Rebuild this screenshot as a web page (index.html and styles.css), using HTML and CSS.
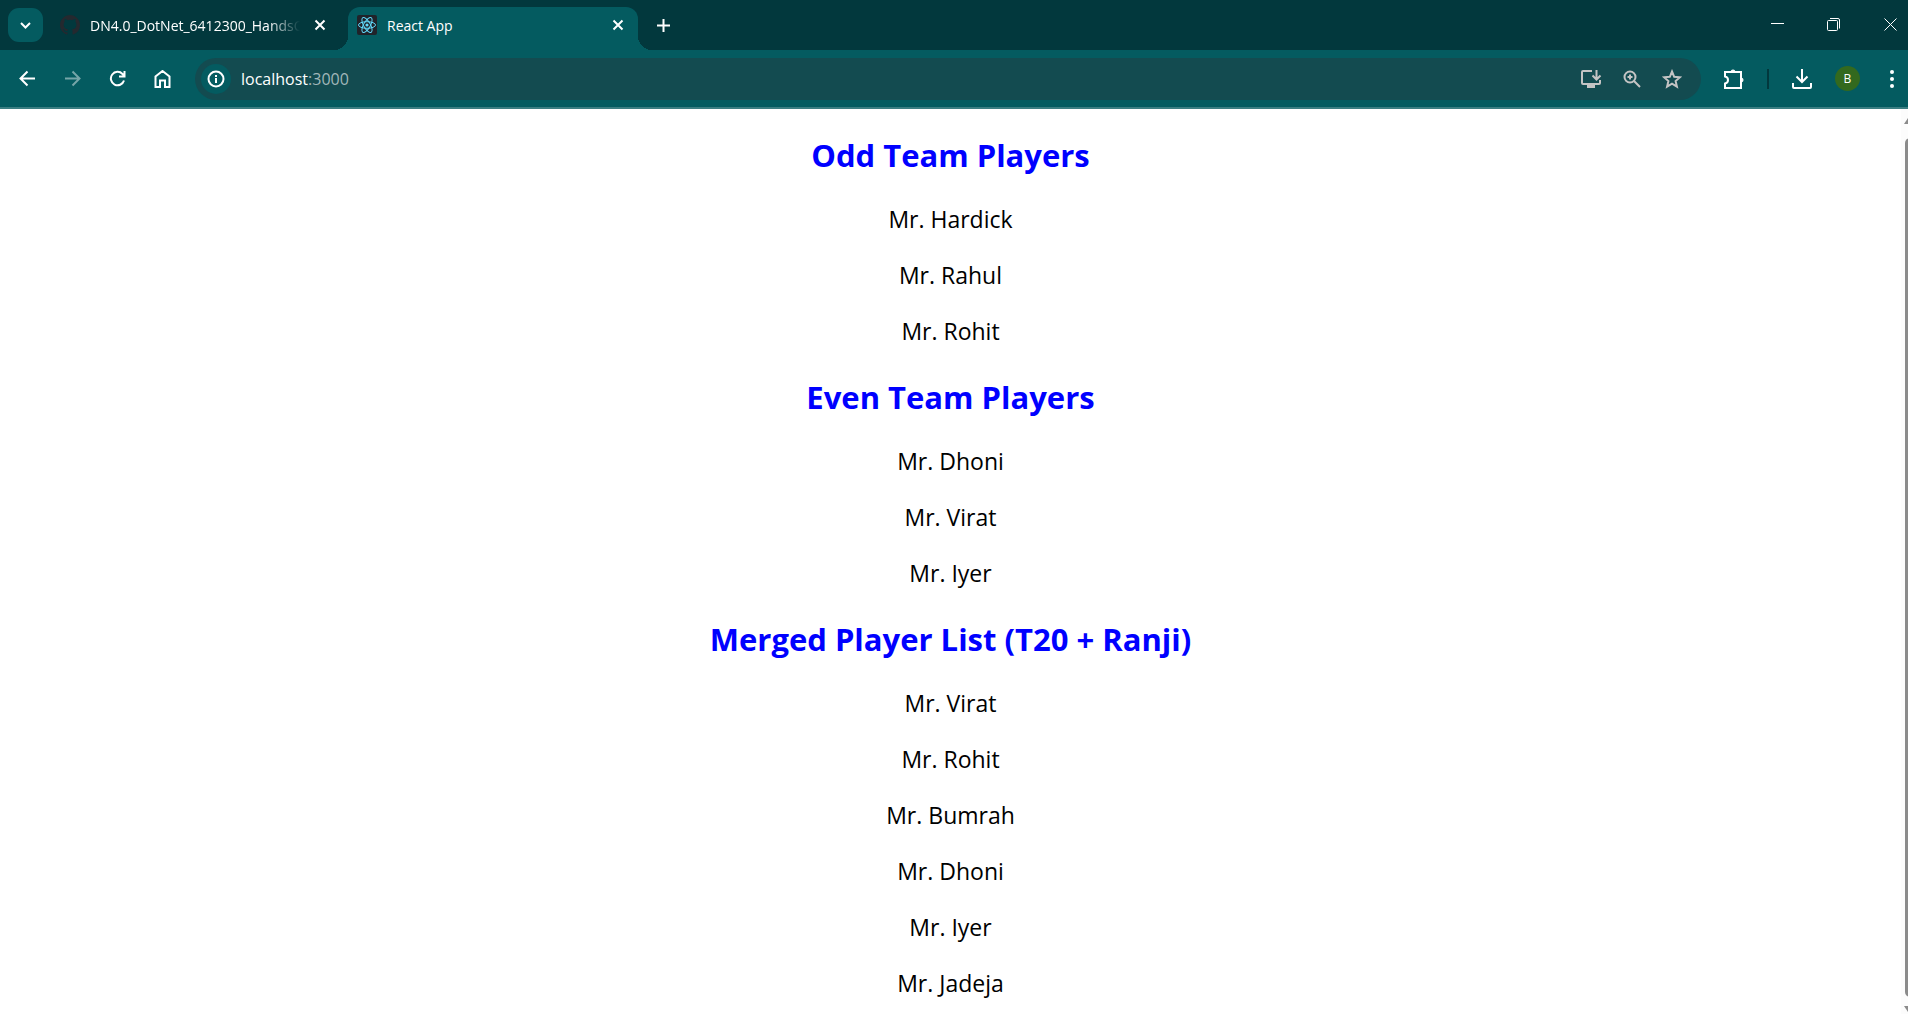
FILE: index.html
```
<!DOCTYPE html>
<html lang="en">
<head>
<meta charset="utf-8">
<meta name="viewport" content="width=device-width, initial-scale=1">
<title>React App</title>
<link rel="stylesheet" href="styles.css">
</head>
<body>
<header class="browser">
  <div class="tabstrip">
    <button class="tab-search" aria-label="Search tabs"><svg width="17" height="17" viewBox="0 0 17 17"><path d="M4 6l4.500 4.500L13 6"/></svg></button>
    <div class="tab">
      <svg class="favicon github" width="20" height="20" viewBox="0 0 16 16"><path d="M8 0C3.580 0 0 3.580 0 8c0 3.540 2.290 6.530 5.470 7.590.4.070.55-.17.55-.38v-1.490c-2.010.37-2.530-.49-2.690-.94-.09-.23-.48-.94-.82-1.130-.28-.15-.68-.52-.01-.53.63-.01 1.080.58 1.230.82.72 1.210 1.870.87 2.330.66.07-.52.28-.87.51-1.070-1.780-.2-3.640-.89-3.640-3.950 0-.87.31-1.590.82-2.150-.08-.2-.36-1.020.08-2.120 0 0 .67-.21 2.200.82a7.600 7.600 0 0 1 4 0c1.530-1.040 2.200-.82 2.200-.82.44 1.100.16 1.920.08 2.120.51.56.82 1.270.82 2.150 0 3.070-1.870 3.750-3.650 3.950.29.25.54.73.54 1.480v2.200c0 .21.15.46.55.38A8 8 0 0 0 16 8c0-4.420-3.580-8-8-8z"/></svg>
      <span class="tab-title faded">DN4.0_DotNet_6412300_HandsO</span>
      <button class="tab-close" aria-label="Close tab"><svg width="12" height="12" viewBox="0 0 12 12"><path d="M1.500 1.500l9 9M10.500 1.500l-9 9"/></svg></button>
    </div>
    <div class="tab active">
      <svg class="favicon react" width="20" height="20" viewBox="0 0 20 20"><rect width="20" height="20" rx="2"/><g><ellipse cx="10" cy="10" rx="8.500" ry="3.300"/><ellipse cx="10" cy="10" rx="8.500" ry="3.300" transform="rotate(60 10 10)"/><ellipse cx="10" cy="10" rx="8.500" ry="3.300" transform="rotate(120 10 10)"/></g><circle cx="10" cy="10" r="1.600"/></svg>
      <span class="tab-title">React App</span>
      <button class="tab-close" aria-label="Close tab"><svg width="12" height="12" viewBox="0 0 12 12"><path d="M1.500 1.500l9 9M10.500 1.500l-9 9"/></svg></button>
    </div>
    <button class="new-tab" aria-label="New tab"><svg width="15" height="15" viewBox="0 0 15 15"><path d="M7.500 1v13M1 7.500h13"/></svg></button>
    <div class="window-controls">
      <button aria-label="Minimize"><svg width="15" height="15" viewBox="0 0 15 15"><path d="M1 6.500h13"/></svg></button>
      <button aria-label="Restore"><svg width="15" height="15" viewBox="0 0 15 15"><rect x="1.500" y="3.500" width="10" height="10" rx="1"/><path d="M4 1.500h8q1.500 0 1.500 1.500v8.500"/></svg></button>
      <button aria-label="Close"><svg width="15" height="15" viewBox="0 0 15 15"><path d="M1.500 1.500l12 12M13.500 1.500l-12 12"/></svg></button>
    </div>
  </div>
  <div class="toolbar">
    <nav class="nav-buttons">
      <button aria-label="Back"><svg width="17" height="17" viewBox="0 0 17 17"><path d="M16 8.500H2M8.500 1.500l-7 7 7 7"/></svg></button>
      <button aria-label="Forward" disabled><svg width="17" height="17" viewBox="0 0 17 17"><path d="M1 8.500h14M8.500 1.500l7 7-7 7"/></svg></button>
      <button aria-label="Reload"><svg width="17" height="17" viewBox="0 0 17 17"><path d="M15 10.500A6.700 6.700 0 1 1 13.500 4L15 5.500M15.500 1v5.500H10"/></svg></button>
      <button aria-label="Home"><svg width="17" height="18" viewBox="0 0 17 18"><path d="M1.500 17V6.500l7-5.500 7 5.500V17h-4.500v-6.500H6V17z"/></svg></button>
    </nav>
    <div class="omnibox">
      <button class="site-info" aria-label="Site information"><svg width="18" height="18" viewBox="0 0 18 18"><circle cx="9" cy="9" r="7.500"/><path d="M9 8v5M9 5v2"/></svg></button>
      <a class="url" href="http://localhost:3000">localhost<span>:3000</span></a>
      <button aria-label="Install app"><svg width="22" height="20" viewBox="0 0 22 20"><path d="M12 2H3Q2 2 2 3v11q0 1 1 1h16q1 0 1-1v-3M16.500 1v9M12.500 6.500l4 4 4-4"/><path class="stand" d="M7 17h8"/></svg></button>
      <button aria-label="Zoom"><svg width="20" height="20" viewBox="0 0 20 20"><circle cx="8" cy="8" r="5.500"/><path d="M12 12l6 6M8 5.500v5M5.500 8h5"/></svg></button>
      <button aria-label="Bookmark this tab"><svg width="20" height="20" viewBox="0 0 20 20"><path d="M10 2.500l2.200 5.300 5.700.5-4.300 3.700 1.300 5.600-4.900-3-4.900 3 1.300-5.600L2.100 8.300l5.700-.5z"/></svg></button>
    </div>
    <div class="actions">
      <button aria-label="Extensions"><svg width="22" height="22" viewBox="0 0 22 22"><path d="M2 4h16v16H2v-4.500q3-.5 3-3.500T2 8.500z"/><path class="solid" d="M8 3.500a2 1.500 0 0 1 4 0zM18.500 10a1.500 2 0 0 1 0 4z"/></svg></button>
      <span class="divider"></span>
      <button aria-label="Downloads"><svg width="22" height="22" viewBox="0 0 22 22"><path d="M11 1v13M5.500 8.500L11 14l5.500-5.500M2 15v4q0 1 1 1h16q1 0 1-1v-4"/></svg></button>
      <button class="avatar" aria-label="Profile">B</button>
      <button class="menu" aria-label="Menu"><svg width="6" height="20" viewBox="0 0 6 20"><g class="dots"><circle cx="3" cy="3" r="2"/><circle cx="3" cy="10" r="2"/><circle cx="3" cy="17" r="2"/></g></svg></button>
    </div>
  </div>
</header>
<div class="viewport">
  <main class="page">
    <h2>Odd Team Players</h2>
    <p>Mr. Hardick</p>
    <p>Mr. Rahul</p>
    <p>Mr. Rohit</p>
    <h2>Even Team Players</h2>
    <p>Mr. Dhoni</p>
    <p>Mr. Virat</p>
    <p>Mr. Iyer</p>
    <h2>Merged Player List (T20 + Ranji)</h2>
    <p>Mr. Virat</p>
    <p>Mr. Rohit</p>
    <p>Mr. Bumrah</p>
    <p>Mr. Dhoni</p>
    <p>Mr. Iyer</p>
    <p>Mr. Jadeja</p>
  </main>
  <div class="scrollbar" aria-hidden="true">
    <svg width="18" height="16" viewBox="0 0 18 16"><path d="M3 15l6-9 6 9z"/></svg>
    <div class="thumb"></div>
    <svg width="18" height="9" viewBox="0 0 18 9"><path d="M3 1l6 9 6-9z"/></svg>
  </div>
</div>
</body>
</html>
```
FILE: styles.css
```
* { box-sizing: border-box; }

body {
  margin: 0;
  height: 100vh;
  display: flex;
  flex-direction: column;
  overflow: hidden;
  background: #fff;
  font-family: "Segoe UI", "Open Sans", "Noto Sans", sans-serif;
}

button {
  display: flex;
  align-items: center;
  justify-content: center;
  flex: none;
  padding: 0;
  border: 0;
  background: none;
  color: inherit;
  font: inherit;
}

svg { display: block; flex: none; fill: none; stroke: currentColor; stroke-width: 2; }

.solid { fill: currentColor; stroke-width: 1; }
.dots { fill: currentColor; stroke: none; }
.stand { stroke-width: 4; }

/* Tab strip */
.browser { flex: none; color: #fff; background: #045b60; }

.tabstrip {
  display: flex;
  align-items: flex-start;
  height: 50px;
  padding-left: 8px;
  background: #02383d;
}

.tab-search {
  width: 35px;
  height: 34px;
  margin: 8px 8px 0 0;
  border-radius: 11px;
  background: #045b60;
}

.tab {
  display: flex;
  align-items: center;
  width: 290px;
  height: 43px;
  margin-top: 7px;
  padding: 0 14px 7px 9px;
  font-size: 14px;
}

.tab:not(.active) { width: 297px; padding-right: 22px; }

.tab.active {
  position: relative;
  border-radius: 12px 12px 0 0;
  background: #045b60;
}

.tab.active::before,
.tab.active::after {
  content: "";
  position: absolute;
  bottom: 0;
  width: 14px;
  height: 14px;
}

.tab.active::before {
  right: 100%;
  background: radial-gradient(circle at 0 0, transparent 14px, #045b60 14px);
}

.tab.active::after {
  left: 100%;
  background: radial-gradient(circle at 100% 0, transparent 14px, #045b60 14px);
}

.favicon { margin-right: 10px; stroke: none; }
.github { fill: #24292f; }
.react { fill: #61dafb; }
.react rect { fill: #20232a; }
.react g { fill: none; stroke: #61dafb; stroke-width: 1; }

.tab-title { flex: 1; min-width: 0; overflow: hidden; white-space: nowrap; }

.faded {
  -webkit-mask-image: linear-gradient(to right, #000 calc(100% - 32px), transparent);
  mask-image: linear-gradient(to right, #000 calc(100% - 32px), transparent);
}

.tab-close { margin-left: 14px; }
.new-tab { width: 50px; height: 50px; }

.window-controls { display: flex; margin-left: auto; }
.window-controls button { width: 56px; height: 48px; }
.window-controls button:last-child { width: 58px; margin-right: -11px; }
.window-controls svg { stroke-width: 1; }

/* Toolbar */
.toolbar {
  display: flex;
  align-items: center;
  height: 59px;
  padding: 0 6px 0 5px;
  border-bottom: 2px solid #3b7e82;
}

.nav-buttons { display: flex; margin-right: 10px; }
.nav-buttons button { width: 45px; height: 40px; }
.nav-buttons button:disabled { opacity: 0.45; }

.omnibox {
  display: flex;
  flex: 1;
  align-items: center;
  gap: 20px;
  height: 42px;
  padding: 0 19px 0 6px;
  border-radius: 21px;
  background: #134b50;
  color: #c4c4c4;
}

.site-info {
  width: 30px;
  height: 30px;
  border-radius: 50%;
  background: #045b60;
  color: #fff;
}

.url { flex: 1; margin-left: -10px; color: #fff; font-size: 16px; text-decoration: none; }
.url span { color: #a1b7b9; }

.actions { display: flex; align-items: center; gap: 22px; padding-left: 22px; }
.divider { width: 2px; height: 20px; background: #02383d; }

.avatar {
  width: 25px;
  height: 25px;
  border-radius: 50%;
  background: #33691e;
  font-size: 12px;
}

.menu { width: 20px; height: 32px; }

/* Page content */
.viewport { display: flex; flex: 1; min-height: 0; }

.page {
  flex: 1;
  overflow: hidden;
  color: #000;
  text-align: center;
}

h2 {
  margin: 26px 0 24px;
  color: #00f;
  font-size: 31px;
  line-height: 48px;
}

h2:first-child { margin-top: 22px; }

p { margin: 24px 0; font-size: 23px; line-height: 32px; }

.scrollbar {
  display: flex;
  flex-direction: column;
  flex: none;
  align-items: flex-start;
  width: 7px;
  overflow: hidden;
  background: #fcfcfc;
  color: #8b8b8b;
}

.scrollbar svg { fill: currentColor; stroke: none; }
.thumb { flex: 1; width: 10px; margin: 13px 0 8px 4px; border-radius: 5px; background: #8b8b8b; }
```
